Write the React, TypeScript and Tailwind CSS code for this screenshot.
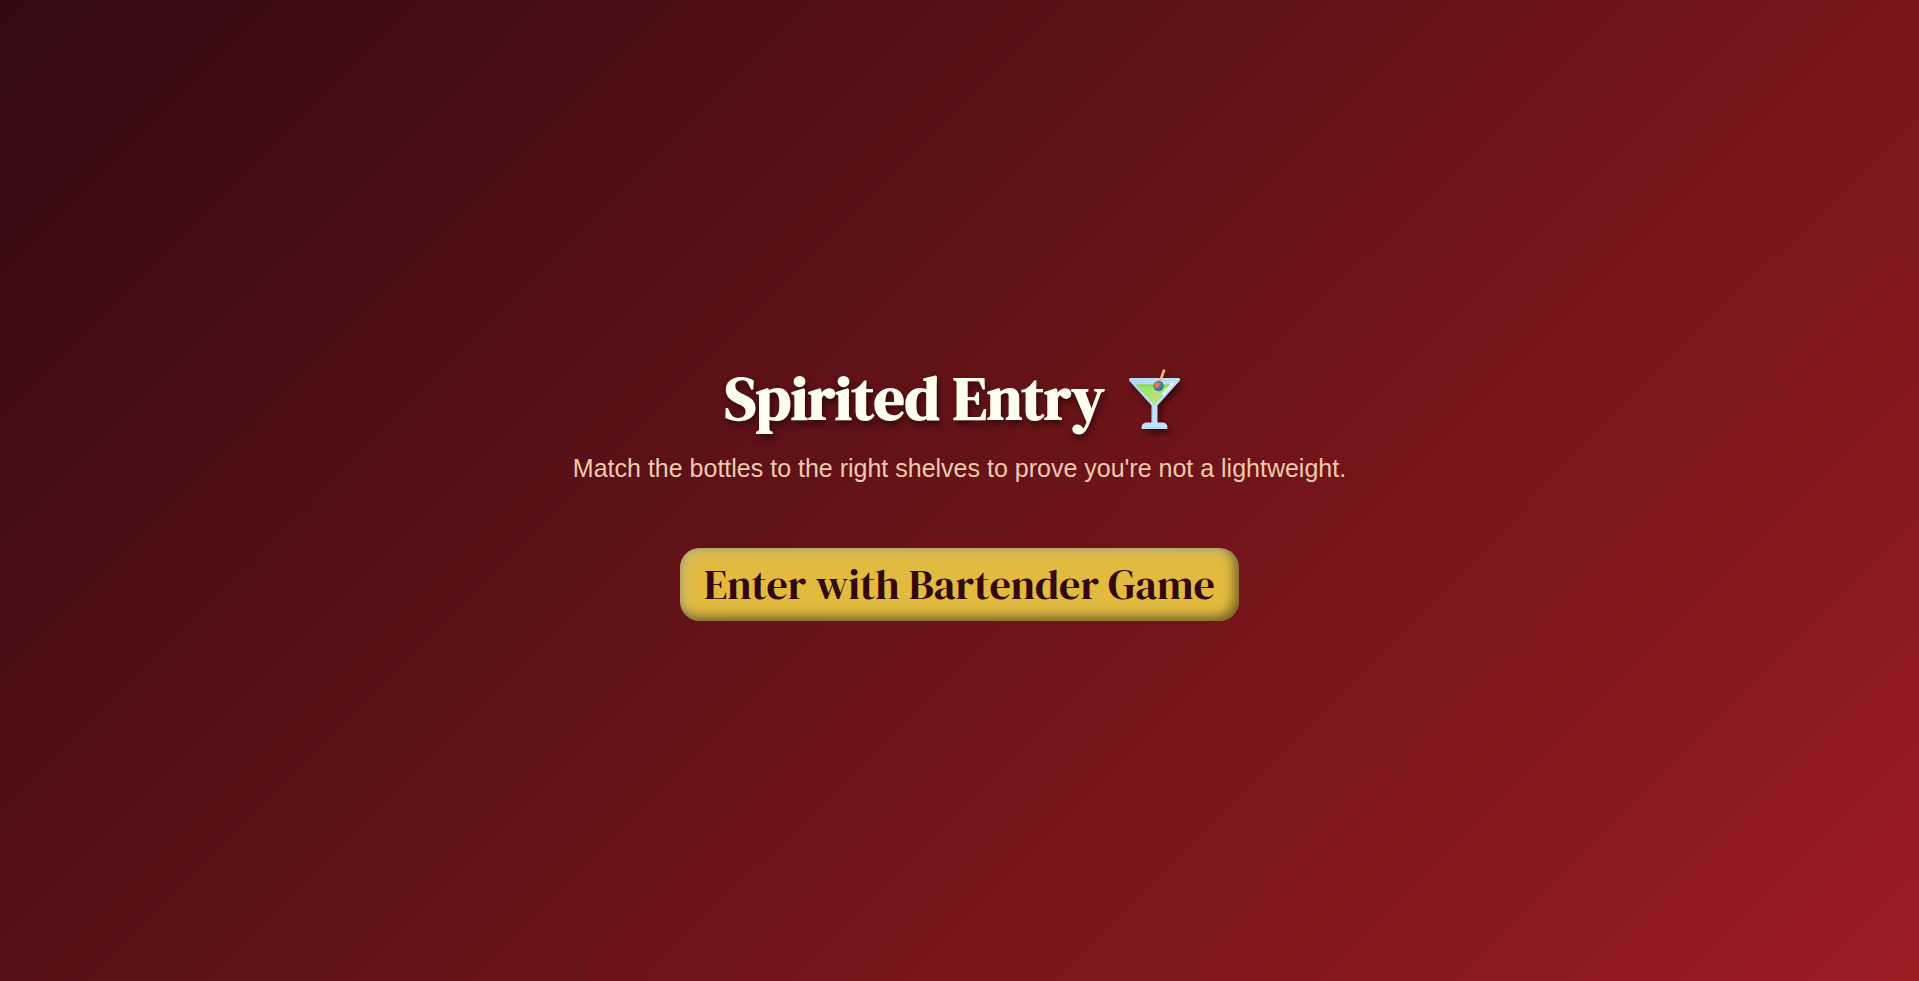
function Martini() {
  return (
    <svg
      viewBox="0 0 54 64"
      className="mt-1 h-16 w-[54px] shrink-0 drop-shadow-[3px_4px_3px_rgba(0,0,0,0.5)]"
      role="img"
      aria-label="Cocktail glass"
    >
      <defs>
        <linearGradient id="glass" x1="0" y1="0" x2="1" y2="1">
          <stop offset="0" stopColor="#b5d6f5" />
          <stop offset="1" stopColor="#c5e8fb" />
        </linearGradient>
        <linearGradient id="drink" x1="0" y1="0" x2="1" y2="1">
          <stop offset="0" stopColor="#94e35c" />
          <stop offset="1" stopColor="#b5ee8e" />
        </linearGradient>
        <linearGradient id="olive" x1="0" y1="0" x2="1" y2="1">
          <stop offset="0" stopColor="#4b9385" />
          <stop offset="1" stopColor="#3d6fa0" />
        </linearGradient>
      </defs>
      <path
        d="M2.500 10H50.500Q53 10.500 51.500 13L29.500 37.500V54.500H35Q39.500 55 39.500 60Q39.500 61 38.500 61H14.500Q13.500 61 13.500 60Q13.500 55 18 54.500H23.500V37.500L1.500 13Q0 10.500 2.500 10Z"
        fill="url(#glass)"
      />
      <path d="M9 16.500H44L29 34.500Q26.500 37 24 34.500L9.500 19Q8 17 9 16.500Z" fill="url(#drink)" />
      <path d="M9 16.500H44L42.500 18.500H10Z" fill="#87d957" />
      <path d="M44.500 15.500L35.500 26" stroke="#f4fbff" strokeWidth="2.600" strokeLinecap="round" opacity="0.9" />
      <path d="M36 2.500L31 16" stroke="#f4b183" strokeWidth="2.600" strokeLinecap="round" />
      <path d="M29.500 20L27 30.500" stroke="#f2c184" strokeWidth="2.600" strokeLinecap="round" />
      <circle cx="30.500" cy="18" r="5.300" fill="url(#olive)" />
      <circle cx="29" cy="17" r="2.800" fill="#f0724a" />
      <path d="M24.500 39V55" stroke="#afd3f2" strokeWidth="1" />
      <path d="M15 60H38" stroke="#b2d4f3" strokeWidth="1" />
    </svg>
  );
}

export default function App() {
  return (
    <main className="flex min-h-screen flex-col items-center justify-center bg-linear-[135deg,#33090f_0%,#5f1217_42%,#7b161b_70%,#9b1c22_100%] px-4 text-center">
      <h1 className="flex items-center gap-6 pr-3 font-['DM_Serif_Display','Liberation_Serif',serif] text-[61px] leading-[76px] font-bold text-[#fffff0] [text-shadow:2px_4px_6px_rgba(0,0,0,0.5)]">
        <span>Spirited Entry</span>
        <Martini />
      </h1>
      <p className="mt-3 font-['Liberation_Sans',Arial,sans-serif] text-[25px] leading-10 text-[#f0c9b0]">
        Match the bottles to the right shelves to prove you're not a lightweight.
      </p>
      <button
        type="button"
        className="mt-[60px] cursor-pointer rounded-[20px] bg-[#e1ba3f] px-6 py-2 font-['DM_Serif_Display','Liberation_Serif',serif] text-[42px] leading-[57px] text-[#33080e] shadow-[inset_-4px_-4px_12px_rgba(0,0,0,0.5),inset_4px_4px_12px_rgba(190,190,170,0.6)]"
      >
        Enter with Bartender Game
      </button>
    </main>
  );
}
